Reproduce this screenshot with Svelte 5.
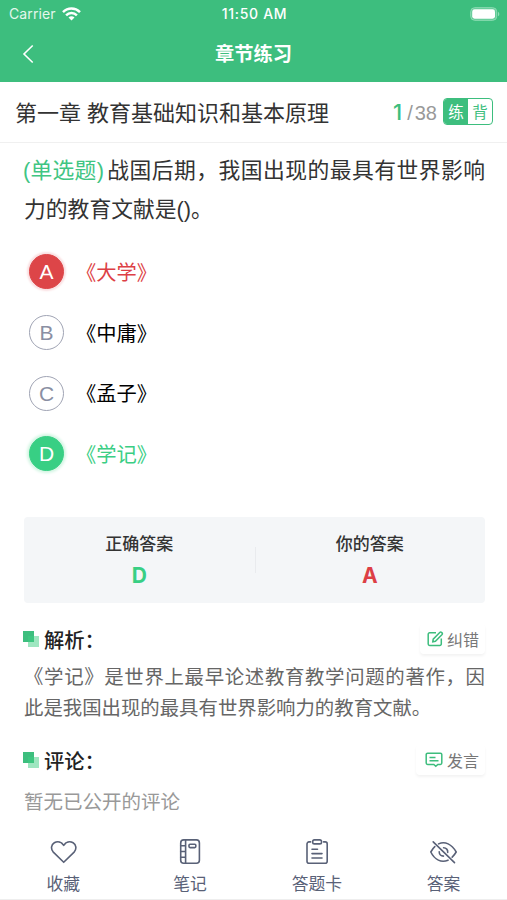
<script>
  let selected = "A";
  let correct = "D";

  const options = [
    { key: "A", text: "《大学》" },
    { key: "B", text: "《中庸》" },
    { key: "C", text: "《孟子》" },
    { key: "D", text: "《学记》" },
  ];

  const tabs = [
    { icon: "heart", label: "收藏" },
    { icon: "note", label: "笔记" },
    { icon: "card", label: "答题卡" },
    { icon: "eye", label: "答案" },
  ];
</script>

<div class="page">
  <header>
    <div class="status">
      <div class="carrier">
        <span>Carrier</span>
        <svg width="19" height="14" viewBox="0 0 19 14" fill="none" stroke="#fff" stroke-width="2.5">
          <path d="M1 5.1C5.8.4 13.2.4 18 5.1" />
          <path d="M4.1 8.3c3-3 7.8-3 10.8 0" />
          <path d="M9.5 13.4 6.5 10.4c1.7-1.7 4.3-1.7 6 0z" fill="#fff" stroke="none" />
        </svg>
      </div>
      <span class="time">11:50 AM</span>
      <div class="power">
        <svg width="30" height="14" viewBox="0 0 30 14">
          <rect x="0.7" y="0.7" width="26" height="12.6" rx="4" fill="#62cb97" stroke="#8fdcb5" stroke-width="1" />
          <rect x="2.2" y="2.3" width="22.8" height="9.4" rx="2.4" fill="#fff" />
          <path d="M28 4.7c1.8.8 1.8 3.8 0 4.6z" fill="#8fdcb5" />
        </svg>
      </div>
    </div>
    <div class="nav">
      <svg width="12" height="20" viewBox="0 0 12 20" fill="none" stroke="#fff" stroke-width="1.6">
        <path d="M10.7 1.5 2 10l8.7 8.5" />
      </svg>
      <h1>章节练习</h1>
    </div>
  </header>

  <div class="chapter">
    <h2>第一章 教育基础知识和基本原理</h2>
    <div class="count"><b>1</b><span class="slash">/</span><span>38</span></div>
    <div class="mode">
      <span class="on">练</span>
      <span>背</span>
    </div>
  </div>

  <main>
    <p class="question"><span class="type">(单选题)</span><span>战国后期，我国出现的最具有世界影响力的教育文献是()。</span></p>

    <ul class="options">
      {#each options as o}
        <li class:wrong={o.key === selected && o.key !== correct} class:right={o.key === correct}>
          <span class="letter">{o.key}</span>
          <span class="text">{o.text}</span>
        </li>
      {/each}
    </ul>

    <div class="result">
      <div>
        <p>正确答案</p>
        <strong class="green">{correct}</strong>
      </div>
      <div>
        <p>你的答案</p>
        <strong class="red">{selected}</strong>
      </div>
    </div>

    <section>
      <div class="head">
        <i class="mark"></i>
        <h3>解析：</h3>
        <button class="fix">
          <svg width="17" height="16" viewBox="0 0 17 16" fill="none" stroke="#3dbd7d" stroke-width="1.5">
            <path d="M9 1.8H2.6a1.4 1.4 0 0 0-1.4 1.4v9.9a1.4 1.4 0 0 0 1.4 1.4h10.3a1.4 1.4 0 0 0 1.4-1.4V7.6" />
            <path d="M5.8 10.7 6.2 8.1 13 1.3c.9-.9 3.1 1.1 2.1 2.2L8.4 10.2z" />
          </svg>
          <span>纠错</span>
        </button>
      </div>
      <p class="explain">《学记》是世界上最早论述教育教学问题的著作，因此是我国出现的最具有世界影响力的教育文献。</p>
    </section>

    <section class="comments">
      <div class="head">
        <i class="mark"></i>
        <h3>评论：</h3>
        <button class="say">
          <svg width="18" height="16" viewBox="0 0 18 16" fill="none" stroke="#3dbd7d" stroke-width="1.5">
            <path d="M2.6 1.2h12.8a1.4 1.4 0 0 1 1.4 1.4v8.4a1.4 1.4 0 0 1-1.4 1.4h-2.6l-2 1.9-2-1.9H2.6A1.4 1.4 0 0 1 1.2 11V2.6a1.4 1.4 0 0 1 1.4-1.4z" />
            <path d="M4.5 5.4h6M4.5 8.7h9" />
          </svg>
          <span>发言</span>
        </button>
      </div>
      <p class="empty">暂无已公开的评论</p>
    </section>
  </main>

  <footer>
    {#each tabs as tab}
      <div class="tab">
        <svg width="28" height="28" viewBox="0 0 28 28" fill="none" stroke="#596177" stroke-width="1.6" stroke-linecap="round" stroke-linejoin="round">
          {#if tab.icon === "heart"}
            <path d="M14.7 24.3 4.3 14.1C1.4 11 2.3 6.5 5.3 4.8c3.4-1.9 7.2-.8 9.4 2.6 2.2-3.4 6-4.5 9.4-2.6 3 1.7 3.9 6.2 1 9.3z" />
          {:else if tab.icon === "note"}
            <rect x="4.7" y="1.9" width="18.7" height="23.4" rx="3" />
            <path d="M9.6 2v23.3M4.7 7.7h4.9M4.7 13.5h4.9M4.7 19.3h4.9" />
            <rect x="13" y="6.2" width="6.8" height="3.4" rx="1" />
          {:else if tab.icon === "card"}
            <path d="M7.6 3.9H6a2 2 0 0 0-2 2v17.4a2 2 0 0 0 2 2h16.2a2 2 0 0 0 2-2V5.9a2 2 0 0 0-2-2h-1.6" />
            <rect x="9.7" y="1.9" width="8.8" height="4" rx="1.7" />
            <path d="M9 11.2h5.5M9 15.6h10M9 20h10" />
          {:else}
            <path d="M8.6 5.9C15 2.9 21.7 6.2 26.2 14c-1.2 2-2.5 3.7-4 5.1M18 22.2C11.3 25.1 4.7 21.9.8 14c1.2-2.2 2.4-4 4-5.4" />
            <path d="M3.2 3.9 24.5 24.6" />
            <path d="M13.6 9.8c2.6 0 4.4 1.9 4.1 4.6M9.2 13.8c0 2.5 1.9 4.3 4.3 4.3" />
          {/if}
        </svg>
        <span>{tab.label}</span>
      </div>
    {/each}
  </footer>
</div>

<style>
  :global(body) {
    background: #fff;
  }

  .page {
    box-sizing: border-box;
    height: 900px;
    display: flex;
    flex-direction: column;
    overflow: hidden;
    font-family: "Liberation Sans", "Noto Sans CJK SC", sans-serif;
    color: #333;
    border-bottom: 1px solid #eee;
  }

  h1,
  h2,
  h3,
  p,
  ul {
    margin: 0;
    padding: 0;
  }

  header {
    flex: none;
    height: 81.5px;
    background: #3dbe7e;
    color: #fff;
  }

  .status {
    display: grid;
    grid-template-columns: 1fr auto 1fr;
    align-items: center;
    height: 27px;
    padding: 0 7px 0 9px;
    font-family: Inter, sans-serif;
    font-size: 14px;
  }

  .carrier {
    display: flex;
    align-items: center;
    gap: 6px;
    letter-spacing: 0.1px;
    color: #e3f7ec;
  }

  .time {
    font-size: 14px;
    font-weight: 500;
    letter-spacing: 0.7px;
  }

  .power {
    display: flex;
    justify-content: flex-end;
  }

  .nav {
    display: grid;
    grid-template-columns: 1fr auto 1fr;
    align-items: center;
    height: 54px;
    padding: 0 22px;
  }

  h1 {
    padding-top: 2px;
    font-size: 19.3px;
    line-height: 28px;
    font-weight: 700;
  }

  .chapter {
    flex: none;
    display: flex;
    align-items: center;
    height: 61px;
    padding: 0 14px 0 15px;
    border-bottom: 1px solid #f0f0f0;
    box-sizing: border-box;
  }

  h2 {
    flex: 1;
    padding-bottom: 2px;
    font-size: 22px;
    font-weight: 400;
    white-space: nowrap;
  }

  .count {
    display: flex;
    align-items: baseline;
    font-size: 20px;
    color: #999;
  }

  .count b {
    font-family: Inter, sans-serif;
    font-size: 22px;
    line-height: 28px;
    font-weight: 500;
    color: #3dbe7e;
  }

  .slash {
    margin: 0 2px 0 5px;
  }

  .mode {
    display: flex;
    box-sizing: border-box;
    width: 50px;
    height: 27px;
    margin-left: 6px;
    border: 1px solid #3dbe7e;
    border-radius: 4px;
    overflow: hidden;
    font-size: 15.5px;
    line-height: 28px;
    color: #3dbe7e;
  }

  .mode span {
    flex: 1;
    text-align: center;
  }

  .mode .on {
    background: #3dbe7e;
    color: #fff;
  }

  main {
    flex: 1;
    padding: 8px 22px 0 24px;
  }

  .question {
    font-size: 21.8px;
    line-height: 39px;
    text-align: justify;
  }

  .type {
    margin-right: 3px;
    margin-left: -1px;
    letter-spacing: -0.2px;
    color: #3fc583;
  }

  .options {
    list-style: none;
    margin-top: 13px;
  }

  .options li {
    display: flex;
    align-items: center;
    height: 60.7px;
    padding-left: 5px;
    color: #000;
  }

  .letter {
    box-sizing: border-box;
    width: 35px;
    height: 35px;
    border: 1.5px solid #a0a4b4;
    border-radius: 50%;
    font-size: 21px;
    line-height: 33px;
    text-align: center;
    color: #8a8fa3;
  }

  .text {
    margin-left: 12px;
    padding-top: 2px;
    font-size: 20.3px;
    line-height: 30px;
  }

  .wrong {
    color: #dd3f45 !important;
  }

  .right {
    color: #3ace84 !important;
  }

  .wrong .letter {
    border-color: #dd4548;
    background: #dd4548;
    color: #fff;
    box-shadow: 0 0 2px 2px #fadfe1;
  }

  .right .letter {
    border-color: #38cf84;
    background: #38cf84;
    color: #fff;
    box-shadow: 0 0 3px 2px #d0f5e1;
  }

  .result {
    display: flex;
    height: 86px;
    margin-top: 33px;
    background: #f4f6f8;
    border-radius: 4px;
  }

  .result div {
    flex: 1;
    padding-top: 15px;
    text-align: center;
  }

  .result div + div {
    background: linear-gradient(#e9ebee, #e9ebee) 0 50% / 1px 26px no-repeat;
  }

  .result p {
    font-size: 17px;
    line-height: 26px;
    font-weight: 500;
  }

  .result strong {
    display: block;
    font-family: Inter, sans-serif;
    font-size: 21px;
    line-height: 36px;
  }

  .green {
    color: #38cf84;
  }

  .red {
    color: #dd3f45;
  }

  .head {
    display: flex;
    align-items: center;
    height: 30px;
  }

  section {
    margin-top: 22px;
  }

  .mark {
    position: relative;
    width: 11px;
    height: 11px;
    margin: -7px 10px 0 -1px;
    background: #3dbe7e;
  }

  .mark::after {
    content: "";
    position: absolute;
    left: 5px;
    top: 5px;
    width: 11px;
    height: 11px;
    background: rgba(61, 206, 130, 0.5);
  }

  h3 {
    flex: 1;
    padding-top: 2px;
    font-size: 20.3px;
    line-height: 30px;
    font-weight: 500;
    color: #222;
  }

  button {
    display: flex;
    align-items: center;
    gap: 3px;
    height: 30px;
    margin-top: -3px;
    padding: 0 6px 0 7px;
    border: 0;
    border-radius: 4px;
    background: #fff;
    box-shadow: 0 2px 3px rgba(0, 0, 0, 0.05);
    font-family: inherit;
    font-size: 16px;
    color: #777;
  }

  .say {
    gap: 4px;
    padding-left: 9px;
  }

  .explain {
    margin-top: 7px;
    font-size: 19.4px;
    line-height: 30.5px;
    text-align: justify;
    color: #666;
  }

  .comments {
    margin-top: 23px;
  }

  .empty {
    margin-top: 11px;
    font-size: 19.5px;
    line-height: 30px;
    color: #999;
  }

  footer {
    flex: none;
    display: flex;
    height: 68px;
  }

  .tab {
    flex: 1;
    display: flex;
    flex-direction: column;
    align-items: center;
    font-size: 16.8px;
    line-height: 26px;
    color: #596177;
  }

  .tab svg {
    margin: 7px 0 6px;
  }
</style>
